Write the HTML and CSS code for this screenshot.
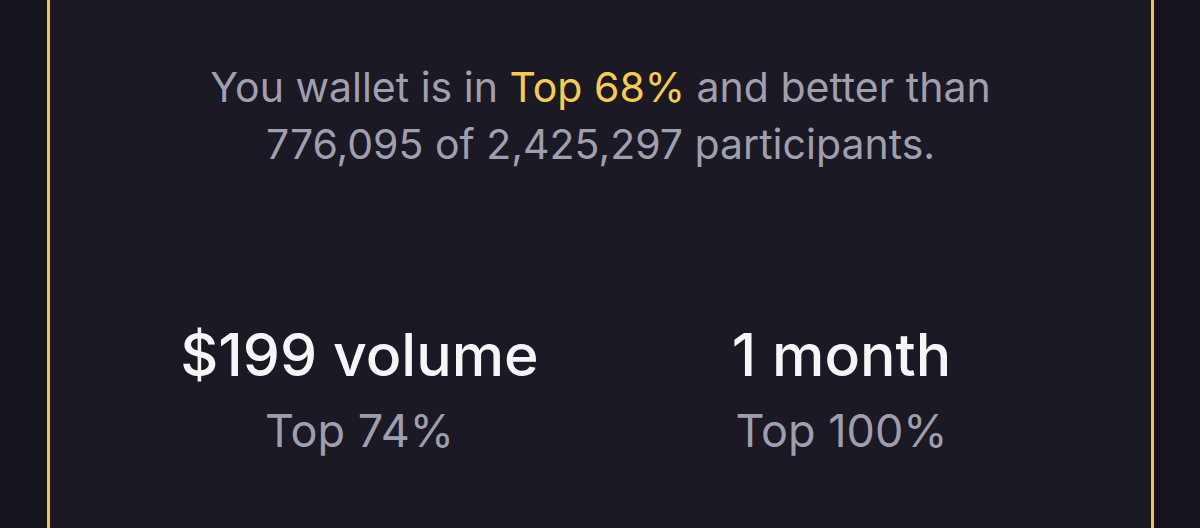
FILE: index.html
```html
<!DOCTYPE html>
<html lang="en">
<head>
  <meta charset="UTF-8">
  <meta name="viewport" content="width=device-width, initial-scale=1.0">
  <title>Wallet rank</title>
  <link rel="stylesheet" href="styles.css">
</head>
<body>
  <div class="page">
    <div class="card">
      <p class="summary">
        You wallet is in <span class="highlight">Top 68%</span> and better than<br>
        776,095 of 2,425,297 participants.
      </p>
      <div class="stats">
        <div class="stat">
          <div class="statValue">$199 volume</div>
          <div class="statRank">Top 74%</div>
        </div>
        <div class="stat">
          <div class="statValue">1 month</div>
          <div class="statRank">Top 100%</div>
        </div>
      </div>
    </div>
  </div>
</body>
</html>
```

FILE: styles.css
```css
html, body {
  margin: 0;
  height: 100%;
}

body {
  background-color: #15141c;
  font-family: Inter, "Noto Sans", sans-serif;
  overflow: hidden;
}

.page {
  height: 100%;
  padding: 0 46px 0 47px;
  box-sizing: border-box;
}

.card {
  height: 100%;
  box-sizing: border-box;
  background-color: #1a1924;
  border-left: 3px solid #f3c64b;
  border-right: 3px solid #f3c64b;
  padding-top: 59px;
}

.summary {
  margin: 0;
  text-align: center;
  font-size: 41px;
  line-height: 57px;
  color: #a09fad;
}

.highlight {
  color: #f8cd4c;
}

.stats {
  display: grid;
  grid-template-columns: 482px 482px;
  justify-content: center;
  margin-top: 147px;
}

.stat {
  text-align: center;
}

.statValue {
  font-size: 59px;
  font-weight: 500;
  line-height: 70px;
  color: #f6f6f8;
}

.statRank {
  margin-top: 11px;
  font-size: 45px;
  line-height: 60px;
  color: #9f9eac;
}
```
